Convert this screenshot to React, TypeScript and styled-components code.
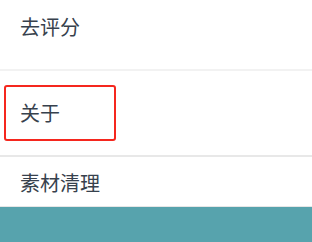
import styled, { createGlobalStyle } from "styled-components";

const GlobalStyle = createGlobalStyle`
  html, body {
    margin: 0;
    padding: 0;
    background: #ffffff;
    overflow: hidden;
  }
  body {
    font-family: "Noto Sans CJK SC", "Noto Sans", sans-serif;
  }
`;

const Page = styled.div`
  width: 312px;
  height: 242px;
  display: flex;
  flex-direction: column;
  overflow: hidden;
`;

const List = styled.div`
  display: flex;
  flex-direction: column;
  margin-top: -15px;
`;

const Item = styled.div<{ $line: string; $height: number }>`
  height: ${(p) => p.$height}px;
  border-bottom: 2px solid ${(p) => p.$line};
  display: flex;
  align-items: center;
  padding-left: 4px;
  box-sizing: content-box;
`;

const LastItem = styled.div`
  height: 49px;
  border-bottom: 1px solid #e6e6e6;
  padding: 0 0 0 20px;
  display: flex;
  align-items: flex-start;
`;

const Label = styled.span<{ $focused?: boolean }>`
  box-sizing: border-box;
  display: flex;
  align-items: center;
  width: 112px;
  height: 56px;
  padding-left: 14px;
  border: 2px solid ${(p) => (p.$focused ? "#f5271e" : "transparent")};
  border-radius: 3px;
  font-size: 20px;
  color: #37414d;
  line-height: 1;
`;

const LastLabel = styled.span`
  margin-top: 16px;
  font-size: 20px;
  line-height: 1;
  color: #37414d;
`;

const Footer = styled.div`
  flex: 1;
  background: #57a3ad;
`;

export default function App() {
  return (
    <>
      <GlobalStyle />
      <Page>
        <List>
          <Item $line="#f2f2f2" $height={84}>
            <Label>去评分</Label>
          </Item>
          <Item $line="#e8e8e8" $height={84}>
            <Label $focused>关于</Label>
          </Item>
          <LastItem>
            <LastLabel>素材清理</LastLabel>
          </LastItem>
        </List>
        <Footer />
      </Page>
    </>
  );
}
